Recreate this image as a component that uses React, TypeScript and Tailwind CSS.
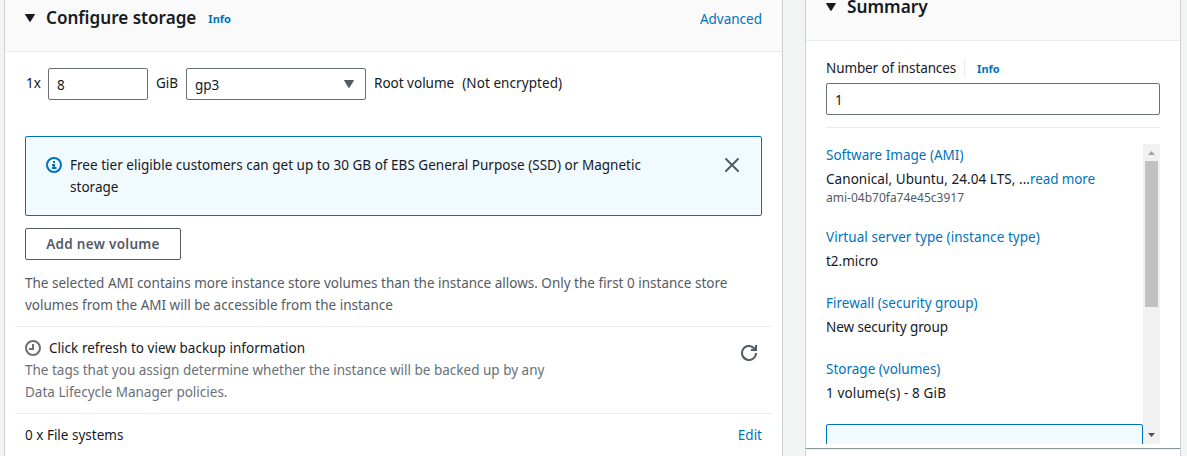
import type { ReactNode } from "react";

function Triangle({ className }: { className: string }) {
  return (
    <svg viewBox="0 0 10 8" className={className} fill="currentColor">
      <path d="M.5 0h9q.7 0 .3.7L5.6 7.5q-.6.8-1.2 0L.2.7Q-.2 0 .5 0z" />
    </svg>
  );
}

function InfoIcon() {
  return (
    <svg viewBox="0 0 16 16" className="mt-[3px] h-4 w-4 shrink-0 text-[#0073bb]" fill="none" stroke="currentColor" strokeWidth="2">
      <circle cx="8" cy="8" r="7" />
      <path d="M6 8h2v3.5M6 11h4.5M7 5h2" />
    </svg>
  );
}

function ClockIcon() {
  return (
    <svg viewBox="0 0 16 16" className="h-4 w-4 shrink-0 text-[#687078]" fill="none" stroke="currentColor" strokeWidth="2">
      <circle cx="8" cy="8" r="7" />
      <path d="M8 4v5H4" />
    </svg>
  );
}

function CloseIcon() {
  return (
    <svg viewBox="0 0 16 16" className="h-4 w-4 text-[#545b64]" fill="none" stroke="currentColor" strokeWidth="2">
      <path d="M2 2l12 12M14 2L2 14" strokeLinecap="round" />
    </svg>
  );
}

function RefreshIcon() {
  return (
    <svg viewBox="0 0 16 16" className="h-4 w-4 text-[#545b64]" fill="none" stroke="currentColor" strokeWidth="2">
      <path d="M15 8a7 7 0 1 1-2.2-5.1L14.5 4.5" />
      <path d="M15 0v5h-5" />
    </svg>
  );
}

function SummaryItem({ title, children, className = "" }: { title: string; children: ReactNode; className?: string }) {
  return (
    <div className="mb-5 flex flex-col gap-0.5">
      <a className={`text-[#0073bb] ${className}`}>{title}</a>
      <div>{children}</div>
    </div>
  );
}

function StoragePanel() {
  return (
    <section className="flex h-[456px] w-[779px] shrink-0 flex-col border-x border-[#ccd1d1] bg-white">
      <header className="flex h-[52px] shrink-0 items-start border-b border-[#eaeded] bg-[#fafafa] pl-5 pr-5 pt-[7px]">
        <Triangle className="mt-[7px] h-2 w-2.5" />
        <h2 className="ml-[11px] text-[17.1px] font-semibold leading-[22px]">Configure storage</h2>
        <a className="ml-3 mt-[3px] text-[11px] font-bold leading-[18px] text-[#0073bb]">Info</a>
        <a className="ml-auto mt-px text-[#0073bb]">Advanced</a>
      </header>

      <div className="flex h-[84px] shrink-0 items-start px-5 pt-4">
        <span className="mt-1 w-[23px] pl-px">1x</span>
        <div className="h-8 w-[100px] rounded-xs border border-[#687078] px-2 pt-[5px]">8</div>
        <span className="mt-1 w-[38px] pl-2">GiB</span>
        <div className="flex h-8 w-[180px] justify-between rounded-xs border border-[#687078] px-2 pr-[11px] pt-[5px]">
          gp3
          <Triangle className="mt-[6px] h-2 w-2.5 text-[#545b64]" />
        </div>
        <span className="ml-2 mt-1">Root volume</span>
        <span className="ml-2 mt-1 tracking-[0.07px]">(Not encrypted)</span>
      </div>

      <div className="mx-5 flex h-20 shrink-0 rounded-xs border border-[#0073bb] bg-[#f1faff] pl-5 pr-[21px] pt-[17px]">
        <InfoIcon />
        <p className="ml-2 w-[600px] tracking-[0.024px]">
          Free tier eligible customers can get up to 30 GB of EBS General Purpose (SSD) or Magnetic
          <br />
          storage
        </p>
        <span className="ml-auto mt-[3px]">
          <CloseIcon />
        </span>
      </div>

      <button className="ml-5 mt-3 h-8 w-[156px] shrink-0 rounded-xs border border-[#545b64] text-[13.5px] font-semibold tracking-[0.3px] text-[#545b64]">
        Add new volume
      </button>
      <p className="mx-5 mt-3 text-[#545b64]">
        The selected AMI contains more instance store volumes than the instance allows. Only the first 0 instance store
        <br />
        volumes from the AMI will be accessible from the instance
      </p>

      <div className="mx-2.5 mt-[10px] flex h-[87px] shrink-0 justify-between border-t border-[#eaeded] pl-2.5 pr-[15px] pt-[10px]">
        <div>
          <div className="flex items-center gap-2 tracking-[0.03px]">
            <ClockIcon />
            Click refresh to view backup information
          </div>
          <p className="text-[#687078]">
            The tags that you assign determine whether the instance will be backed up by any
            <br />
            Data Lifecycle Manager policies.
          </p>
        </div>
        <span className="mt-2">
          <RefreshIcon />
        </span>
      </div>
      <div className="mx-2.5 flex shrink-0 justify-between border-t border-[#eaeded] px-2.5 pt-[10px]">
        <span>0 x File systems</span>
        <a className="text-[#0073bb]">Edit</a>
      </div>
    </section>
  );
}

function ScrollBar() {
  return (
    <div className="flex h-[300px] w-[17px] shrink-0 flex-col items-center bg-[#f1f1f1]">
      <svg viewBox="0 0 17 17" className="h-[17px] w-[17px] shrink-0" fill="#a3a3a3">
        <path d="M5 11l3.5-4 3.5 4z" />
      </svg>
      <div className="h-[146px] w-[13px] bg-[#c1c1c1]" />
      <svg viewBox="0 0 17 17" className="mt-auto h-[17px] w-[17px] shrink-0" fill="#505050">
        <path d="M5 6h7l-3.5 4z" />
      </svg>
    </div>
  );
}

function SummaryPanel() {
  return (
    <div className="ml-[22px] flex w-[376px] shrink-0 flex-col">
      <section className="flex h-[449px] flex-col border-x border-b border-x-[#ccd1d1] border-b-[#879596] bg-white">
        <header className="flex h-[41px] shrink-0 items-start border-b border-[#eaeded] bg-[#fafafa] pl-5">
          <Triangle className="mt-[3px] h-2 w-2.5" />
          <h2 className="ml-[11px] text-[17.3px] font-semibold leading-[14px]">Summary</h2>
        </header>
        <div className="mx-5 flex h-[87px] shrink-0 flex-col border-b border-[#eaeded] pt-4">
          <div className="flex h-[26px] items-start">
            <span className="tracking-[-0.11px]">Number of instances</span>
            <span className="ml-2 mt-0.5 h-[18px] w-px bg-[#eaeded]" />
            <a className="ml-3 mt-px text-[11px] font-bold text-[#0073bb]">Info</a>
          </div>
          <div className="h-8 rounded-xs border border-[#687078] px-2 pt-[5px]">1</div>
        </div>
        <div className="mx-5 mt-4 flex h-[300px] overflow-hidden">
          <div className="w-[317px] shrink-0">
            <SummaryItem title="Software Image (AMI)">
              <span className="tracking-[0.06px]">Canonical, Ubuntu, 24.04 LTS, ...</span>
              <a className="tracking-[-0.11px] text-[#0073bb]">read more</a>
              <div className="text-[12px] leading-4 text-[#545b64]">ami-04b70fa74e45c3917</div>
            </SummaryItem>
            <SummaryItem title="Virtual server type (instance type)" className="tracking-[0.06px]">
              t2.micro
            </SummaryItem>
            <SummaryItem title="Firewall (security group)">
              <span className="tracking-[-0.08px]">New security group</span>
            </SummaryItem>
            <SummaryItem title="Storage (volumes)">
              <span className="tracking-[0.13px]">1 volume(s) - 8 GiB</span>
            </SummaryItem>
            <div className="h-20 rounded-xs border border-[#0073bb] bg-[#f1faff]" />
          </div>
          <ScrollBar />
        </div>
      </section>
      <div className="mt-px h-[6px] border-x border-[#ccd1d1] bg-white" />
    </div>
  );
}

export default function App() {
  return (
    <main className="flex h-[456px] w-[1187px] overflow-hidden bg-[#f2f3f3] pl-1 font-['Noto_Sans',sans-serif] text-[13.5px] leading-[22px] text-[#16191f]">
      <StoragePanel />
      <SummaryPanel />
    </main>
  );
}
